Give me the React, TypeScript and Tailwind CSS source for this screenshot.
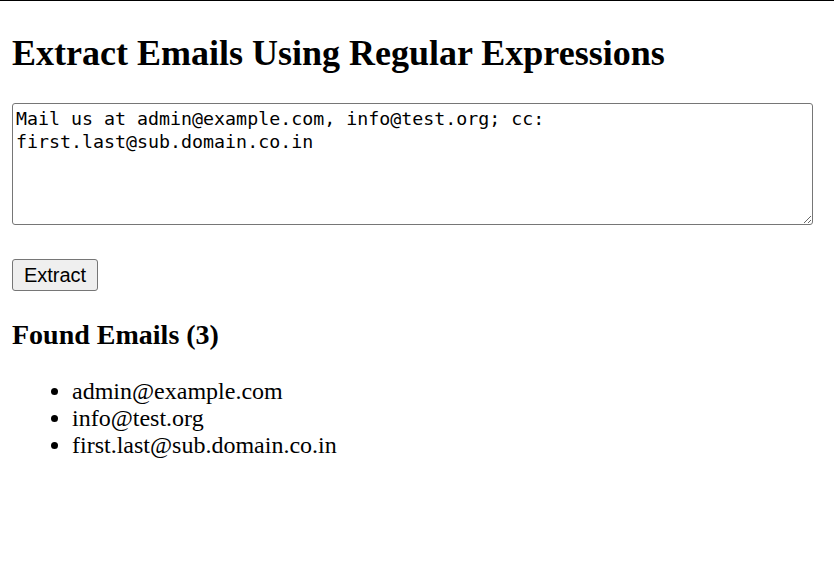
import React, { useState } from 'react';

const EMAIL_RE = /[A-Za-z0-9._%+-]+@[A-Za-z0-9.-]+\.[A-Za-z]{2,}/g;

const initialText = 'Mail us at admin@example.com, info@test.org; cc: first.last@sub.domain.co.in';

export default function App() {
  const [text, setText] = useState(initialText);
  const [emails, setEmails] = useState<string[]>(() => initialText.match(EMAIL_RE) || []);

  const handleExtract = () => {
    setEmails(text.match(EMAIL_RE) || []);
  };

  return (
    <div className="min-h-screen border-t border-black bg-white px-3 font-['Liberation_Serif',serif] text-black">
      <h2 className="mt-[32px] mb-[30px] text-[36px] leading-[40px] font-bold">
        Extract Emails Using Regular Expressions
      </h2>
      <textarea
        value={text}
        onChange={(e) => setText(e.target.value)}
        className="mt-[2px] block h-[122px] w-[801px] rounded-[3px] border border-[#767676] bg-white px-[3px] py-[3px] font-['DejaVu_Sans_Mono',monospace] text-[18.3px] leading-[23px] text-black outline-none"
      />
      <button
        onClick={handleExtract}
        className="mt-[34px] block h-[32px] w-[86px] rounded-[3px] border border-[#767676] bg-[#efefef] font-['Liberation_Sans',Arial,sans-serif] text-[20px] leading-[30px] text-black hover:bg-[#e5e5e5]"
      >
        Extract
      </button>
      <h3 className="mt-[28px] text-[28px] leading-[31px] font-bold">
        Found Emails ({emails.length})
      </h3>
      <ul className="mt-[28px] list-disc pl-[60px] text-[24px] leading-[27px]">
        {emails.map((email, i) => (
          <li key={i}>{email}</li>
        ))}
      </ul>
    </div>
  );
}
